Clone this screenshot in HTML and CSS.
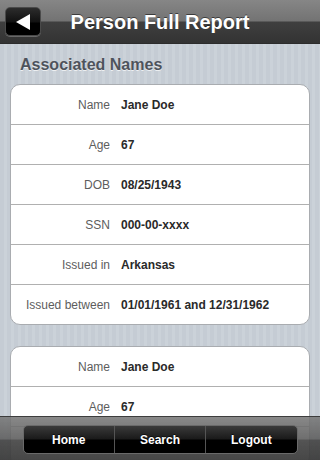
FILE: index.html
```html
<!DOCTYPE html>
<html>
<head>
<meta charset="utf-8">
<link rel="stylesheet" href="styles.css">
</head>
<body>
<div class="app">
  <header class="navbar">
    <button class="back" aria-label="Back">
      <svg width="20" height="18" viewBox="0 0 20 18"><polygon points="2,9 16,1 16,17" fill="#fff"/></svg>
    </button>
    <h1 class="title">Person Full Report</h1>
  </header>
  <main class="content">
    <h2 class="section-title">Associated Names</h2>
    <div class="group">
      <div class="row"><span class="label">Name</span><span class="value">Jane Doe</span></div>
      <div class="row"><span class="label">Age</span><span class="value">67</span></div>
      <div class="row"><span class="label">DOB</span><span class="value">08/25/1943</span></div>
      <div class="row"><span class="label">SSN</span><span class="value">000-00-xxxx</span></div>
      <div class="row"><span class="label">Issued in</span><span class="value">Arkansas</span></div>
      <div class="row"><span class="label">Issued between</span><span class="value">01/01/1961 and 12/31/1962</span></div>
    </div>
    <div class="group">
      <div class="row"><span class="label">Name</span><span class="value">Jane Doe</span></div>
      <div class="row"><span class="label">Age</span><span class="value">67</span></div>
      <div class="row"></div>
    </div>
  </main>
  <footer class="toolbar">
    <div class="segmented">
      <span class="seg">Home</span>
      <span class="seg">Search</span>
      <span class="seg">Logout</span>
    </div>
  </footer>
</div>
</body>
</html>
```
FILE: styles.css
```css
* { box-sizing: border-box; }
html, body { margin: 0; padding: 0; }
body {
  width: 320px;
  height: 460px;
  overflow: hidden;
  font-family: "Liberation Sans", Arial, sans-serif;
  background: repeating-linear-gradient(90deg, #c5ccd4 0, #c5ccd4 4px, #cbd2d9 4px, #cbd2d9 7px);
}
.app {
  position: relative;
  width: 320px;
  height: 460px;
  overflow: hidden;
}
.navbar {
  height: 44px;
  display: flex;
  align-items: center;
  justify-content: center;
  position: relative;
  background: linear-gradient(#868686 0, #737373 21px, #3f3f3f 22px, #333333 43px, #2a2a2a 44px);
  border-bottom: 1px solid #2c2c2c;
}
.back {
  position: absolute;
  left: 5px;
  top: 7px;
  width: 36px;
  height: 29px;
  border: 1px solid #4a4a4a;
  border-radius: 5px;
  background: linear-gradient(#2c2c2c 0, #111 14px, #000 15px, #000 100%);
  box-shadow: 0 1px 0 rgba(255,255,255,0.25);
  padding: 0;
  display: flex;
  align-items: center;
  justify-content: center;
}
.back svg { margin-left: 1px; }
.title {
  margin: 0;
  padding-left: 0;
  padding-top: 1px;
  color: #fff;
  font-size: 20px;
  font-weight: bold;
  text-shadow: 0 -1px 0 rgba(0,0,0,0.5);
}
.content {
  padding: 11px 10px 0 10px;
}
.section-title {
  margin: 0 0 10px 10px;
  font-size: 16px;
  font-weight: bold;
  color: #4e535c;
  text-shadow: 0 1px 0 rgba(255,255,255,0.7);
  height: 19px;
  line-height: 19px;
}
.group {
  background: #fff;
  border: 1px solid #a9acb0;
  border-radius: 10px;
  margin-bottom: 21px;
  overflow: hidden;
}
.row {
  display: flex;
  align-items: center;
  height: 40px;
  border-top: 1px solid #b0b0b0;
  font-size: 12px;
}
.row:first-child { border-top: none; height: 39px; }
.label {
  width: 99px;
  text-align: right;
  color: #5d5d5d;
}
.value {
  margin-left: 11px;
  color: #2a2a2a;
  font-weight: bold;
}
.toolbar {
  position: absolute;
  left: 0;
  bottom: 0;
  width: 320px;
  height: 44px;
  display: flex;
  align-items: center;
  justify-content: center;
  background: linear-gradient(rgba(120,120,120,0.88) 0, rgba(95,95,95,0.9) 22px, rgba(70,70,70,0.92) 23px, rgba(58,58,58,0.94) 44px);
  border-top: 1px solid rgba(60,60,60,0.9);
}
.segmented {
  width: 275px;
  height: 29px;
  margin-top: 2px;
  display: flex;
  border: 1px solid #6a6a6a;
  border-radius: 5px;
  overflow: hidden;
  background: linear-gradient(#3a3a3a 0, #1a1a1a 13px, #000 14px, #000 100%);
}
.seg {
  flex: 1;
  display: flex;
  align-items: center;
  justify-content: center;
  color: #fff;
  font-size: 12px;
  font-weight: bold;
  border-left: 1px solid #555;
  text-shadow: 0 -1px 0 rgba(0,0,0,0.6);
}
.seg:first-child { border-left: none; }
```
